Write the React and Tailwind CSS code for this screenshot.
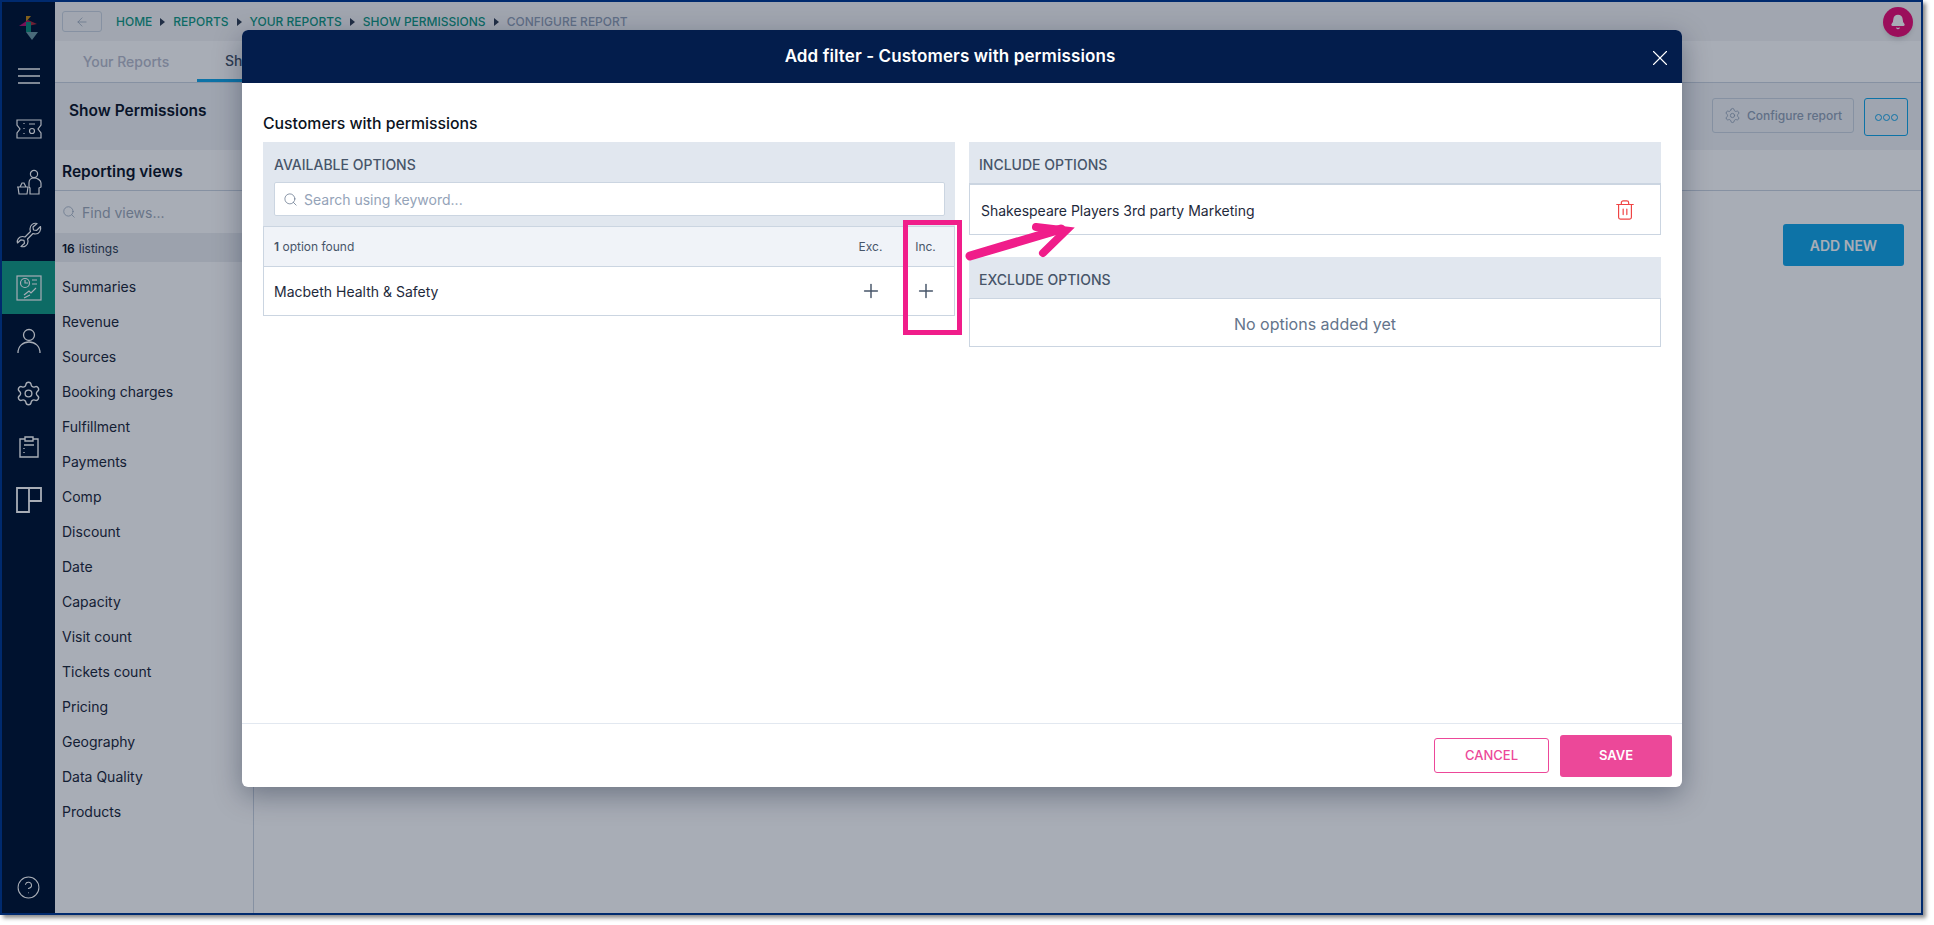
import React from 'react';
import { ArrowLeft, Bell, CircleHelp, Plus, Search, Settings, Trash2, X } from 'lucide-react';

const views = [
  'Summaries', 'Revenue', 'Sources', 'Booking charges', 'Fulfillment', 'Payments', 'Comp', 'Discount',
  'Date', 'Capacity', 'Visit count', 'Tickets count', 'Pricing', 'Geography', 'Data Quality', 'Products',
];

const crumbs = ['HOME', 'REPORTS', 'YOUR REPORTS', 'SHOW PERMISSIONS'];

const Logo = () => (
  <svg width="20" height="26" viewBox="0 0 20 26">
    <polygon points="7,1 12,1 7,7" fill="#c58a16" />
    <polygon points="0,11 9,5 9,11" fill="#b5146f" />
    <polygon points="9,5 18,9 9,11" fill="#a92a3a" />
    <polygon points="7,7 12,7 12,17 7,17" fill="#0f8a78" />
    <polygon points="7,17 19,17 13,25" fill="#6f9aa5" />
  </svg>
);

const Hamburger = () => (
  <svg width="22" height="16" viewBox="0 0 22 16" stroke="#fff" strokeWidth="1.3">
    <path d="M0 1h22M0 8h22M0 15h22" />
  </svg>
);

const Ticket = () => (
  <svg width="26" height="20" viewBox="0 0 26 20" fill="none" stroke="#fff" strokeWidth="1.2">
    <path d="M1 1h24v5l-3 4 3 4v5H1v-5l3-4-3-4z" />
    <path d="M8 4v1M8 9v1M8 14v1M13 5h6" />
    <circle cx="16" cy="12" r="2.5" />
  </svg>
);

const Basket = () => (
  <svg width="26" height="26" viewBox="0 0 26 26" fill="none" stroke="#fff" strokeWidth="1.2">
    <circle cx="18" cy="5" r="3.6" />
    <path d="M14 25v-6l-1-1v-4c0-3 2-5 5-5s7 2 7 5v4l-2 1v6z" />
    <path d="M1 18h11M2 18l1 7h8l1-7M4 18l2-4h2l2 4" />
  </svg>
);

const Spanner = () => (
  <svg width="26" height="26" viewBox="0 0 26 26" fill="none" stroke="#fff" strokeWidth="1.2" strokeLinejoin="round">
    <path d="M24.5 4.5 L20.5 8.5 L17.5 8 L17 5 L21 1.5 C17.5 0.5 14 3 14 7 C14 8 14.2 8.5 14.5 9.5 L9 15 C8 14.6 7 14.5 6.5 14.5 C3 14.5 0.5 18 1.5 21 L5 17.8 L8 18.3 L8.5 21.3 L5 24.5 C8.5 25.5 12 23 12 19.5 C12 18.5 11.8 18 11.5 17 L17 11.5 C18 11.9 19 12 19.5 12 C23 12 25.5 8.5 24.5 4.5 Z" />
  </svg>
);

const Report = () => (
  <svg width="26" height="26" viewBox="0 0 26 26" fill="none" stroke="#fff" strokeWidth="1.2">
    <rect x="1" y="1" width="24" height="24" />
    <circle cx="9" cy="8" r="4.5" />
    <path d="M9 5v3h3M16 5h5M16 9h5M8 20l5-4 2 2 5-5M8 23l6-3" />
  </svg>
);

const Person = () => (
  <svg width="24" height="26" viewBox="0 0 24 26" fill="none" stroke="#fff" strokeWidth="1.3">
    <circle cx="12" cy="7" r="5.5" />
    <path d="M1 25c0-7 5-11 11-11s11 4 11 11" />
  </svg>
);

const Clipboard = () => (
  <svg width="20" height="22" viewBox="0 0 20 22" fill="none" stroke="#fff" strokeWidth="1.4">
    <path d="M6 3H1v18h18V3h-5" />
    <path d="M6 1h8v4H6zM5 9h10M5 12v1M5 16v1" />
  </svg>
);

const Panels = () => (
  <svg width="26" height="26" viewBox="0 0 26 26" fill="none" stroke="#fff" strokeWidth="1.8">
    <path d="M1 1h24v13H13v11H1zM13 1v13" />
  </svg>
);

const RailItem = ({ active, children }) => (
  <div className={`h-[53px] flex items-center justify-center ${active ? 'bg-[#149b85]' : ''}`}>{children}</div>
);

const SectionHead = ({ children, className = '' }) => (
  <div className={`flex items-center px-[10px] text-[14px] font-medium text-[#475569] ${className}`}>{children}</div>
);

const Arrow = () => (
  <svg className="absolute left-[721px] top-[190px]" width="120" height="46" viewBox="0 0 120 46">
    <path d="M7 36 L98 9" stroke="#f01d8a" strokeWidth="9" strokeLinecap="round" fill="none" />
    <path d="M73 7 L103 10.5 L80 33" stroke="#f01d8a" strokeWidth="8" strokeLinecap="round" fill="none" />
  </svg>
);

export default function App() {
  return (
    <div className="w-[1934px] h-[925px] bg-white font-['Inter',sans-serif] overflow-hidden">
      <div className="relative w-[1923px] h-[915px] border-2 border-[#002a6e] shadow-[3px_3px_4px_rgba(0,0,0,0.45)] flex overflow-hidden bg-white">
        {/* left rail */}
        <div className="w-[53px] shrink-0 bg-[#001432] flex flex-col">
          <div className="h-[47px] flex items-center justify-center pt-[4px]"><Logo /></div>
          <RailItem><Hamburger /></RailItem>
          <RailItem><Ticket /></RailItem>
          <RailItem><Basket /></RailItem>
          <RailItem><Spanner /></RailItem>
          <RailItem active><Report /></RailItem>
          <RailItem><Person /></RailItem>
          <RailItem><Settings size={27} strokeWidth={1.2} color="#fff" /></RailItem>
          <RailItem><Clipboard /></RailItem>
          <RailItem><Panels /></RailItem>
          <div className="mt-auto h-[38px] flex items-start justify-center">
            <CircleHelp size={25} strokeWidth={1} color="#fff" />
          </div>
        </div>

        {/* page under the dialog */}
        <div className="flex-1 flex flex-col min-w-0">
          <div className="h-[39px] bg-[#f5f5f6] flex items-center pl-[7px] pr-[8px]">
            <div className="w-[40px] h-[21px] border border-[#cbd5e1] rounded-[3px] flex items-center justify-center mr-[14px]">
              <ArrowLeft size={14} strokeWidth={1.2} color="#94a3b8" />
            </div>
            <div className="flex items-center gap-[8px] text-[12px] font-medium text-[#149b85]">
              {crumbs.map((c) => (
                <React.Fragment key={c}>
                  <span>{c}</span>
                  <span className="w-0 h-0 border-y-[4px] border-y-transparent border-l-[5px] border-l-[#334155]" />
                </React.Fragment>
              ))}
              <span className="text-[#94a3b8]">CONFIGURE REPORT</span>
            </div>
            <div className="relative ml-auto w-[30px] h-[30px] rounded-full bg-[#eb0f76] flex items-center justify-center shadow-md">
              <Bell size={16} color="#fff" fill="#fff" />
            </div>
          </div>

          <div className="h-[42px] bg-white border-b border-[#cbd5e1] flex items-end text-[14px] font-medium">
            <div className="w-[142px] h-full flex items-center justify-center text-[#b9bdcd]">Your Reports</div>
            <div className="w-[150px] h-full flex items-center pl-[28px] border-b-[3px] border-[#15a8e9] text-[#475569] whitespace-nowrap overflow-hidden">Show Permissions</div>
          </div>

          <div className="h-[67px] bg-[#f1f3f6] flex items-start">
            <div className="pl-[14px] pt-[16px] text-[15.5px] font-semibold text-[#0f172a]">Show Permissions</div>
            <div className="ml-auto flex items-start gap-[10px] pt-[15px] pr-[13px]">
              <div className="w-[142px] h-[35px] border border-[#cbd5e1] rounded-[3px] flex items-center justify-center gap-[6px] text-[12px] font-medium text-[#94a3b8]">
                <Settings size={17} strokeWidth={1.2} />
                Configure report
              </div>
              <div className="w-[44px] h-[38px] border border-[#15a8e9] rounded-[3px] flex items-center justify-center gap-[1px]">
                <span className="w-[7px] h-[7px] rounded-full border border-[#15a8e9]" />
                <span className="w-[7px] h-[7px] rounded-full border border-[#15a8e9]" />
                <span className="w-[7px] h-[7px] rounded-full border border-[#15a8e9]" />
              </div>
            </div>
          </div>

          <div className="flex-1 flex min-h-0">
            <div className="w-[199px] shrink-0 border-r border-[#cbd5e1] flex flex-col">
              <div className="h-[41px] border-b border-[#cbd5e1] flex items-center pl-[7px] pt-[3px] text-[15.5px] font-semibold text-[#0f172a]">Reporting views</div>
              <div className="h-[42px] flex items-center gap-[6px] pl-[7px] text-[14px] text-[#a0aab9]">
                <Search size={14} strokeWidth={1.2} color="#94a3b8" />
                Find views...
              </div>
              <div className="h-[29px] bg-[#edeef2] flex items-center pl-[7px] pt-[2px] text-[12px] text-[#334155]">
                <span className="font-semibold text-[#0f172a] mr-[4px]">16</span>listings
              </div>
              <div className="pt-[7px] flex flex-col">
                {views.map((v) => (
                  <div key={v} className="h-[35px] flex items-center pl-[7px] text-[14px] text-[#1e293b]">{v}</div>
                ))}
              </div>
            </div>
            <div className="flex-1 flex flex-col">
              <div className="h-[41px] border-b border-[#cbd5e1]" />
              <div className="flex justify-end pt-[33px] pr-[17px]">
                <div className="w-[121px] h-[42px] bg-[#15a8e9] rounded-[3px] flex items-center justify-center text-[14px] font-semibold text-white">ADD NEW</div>
              </div>
            </div>
          </div>
        </div>

        {/* backdrop and dialog */}
        <div className="absolute inset-0 bg-[#000f29]/[0.34] pl-[240px] pt-[28px]">
          <div className="relative w-[1440px] h-[757px] bg-white rounded-[6px] shadow-[0_8px_28px_rgba(0,15,41,0.35)] flex flex-col overflow-hidden">
            <div className="h-[53px] shrink-0 bg-[#031d4c] flex items-center justify-center pr-[24px] relative">
              <span className="text-[17px] font-semibold tracking-[0.1px] text-white">Add filter - Customers with permissions</span>
              <X size={26} strokeWidth={1} color="#fff" className="absolute right-[9px] top-[15px]" />
            </div>

            <div className="flex-1 px-[21px] pt-[27px] flex flex-col">
              <div className="h-[32px] text-[15.8px] leading-[28px] font-medium text-[#0b1220]">Customers with permissions</div>
              <div className="flex gap-[14px]">
                <div className="w-[692px]">
                  <div className="bg-[#e1e7ef] h-[84px] flex flex-col">
                    <SectionHead className="h-[40px] pl-[11px] pt-[4px]">AVAILABLE OPTIONS</SectionHead>
                    <div className="ml-[11px] mr-[10px] h-[34px] bg-white border border-[#cbd5e1] rounded-[2px] flex items-center gap-[6px] pl-[8px] text-[14px] text-[#94a3b8]">
                      <Search size={15} strokeWidth={1.2} color="#64748b" />
                      Search using keyword...
                    </div>
                  </div>
                  <div className="border border-[#cbd5e1]">
                    <div className="h-[40px] bg-[#f0f3f8] border-b border-[#cbd5e1] flex items-center pl-[10px] pr-[1px] text-[12px] text-[#475569]">
                      <span className="flex-1"><span className="font-semibold">1</span> option found</span>
                      <span className="w-[55px] text-center">Exc.</span>
                      <span className="w-[55px] text-center">Inc.</span>
                    </div>
                    <div className="h-[48px] flex items-center pl-[10px] pr-[1px] text-[14px] text-[#1e293b]">
                      <span className="flex-1">Macbeth Health &amp; Safety</span>
                      <span className="w-[55px] flex justify-center"><Plus size={22} strokeWidth={1.6} color="#475569" /></span>
                      <span className="w-[55px] flex justify-center"><Plus size={22} strokeWidth={1.6} color="#475569" /></span>
                    </div>
                  </div>
                </div>

                <div className="w-[692px]">
                  <SectionHead className="h-[43px] pt-[3px] bg-[#e1e7ef] border-b-2 border-[#cbd5e1]">INCLUDE OPTIONS</SectionHead>
                  <div className="h-[50px] border border-t-0 border-[#cbd5e1] flex items-center pl-[11px] pr-[24px] pt-[1px] text-[14px] text-[#1e293b]">
                    <span className="flex-1">Shakespeare Players 3rd party Marketing</span>
                    <Trash2 size={22} strokeWidth={1.3} color="#ef4444" />
                  </div>
                  <SectionHead className="mt-[22px] h-[42px] pt-[3px] bg-[#e1e7ef] border-b border-[#cbd5e1]">EXCLUDE OPTIONS</SectionHead>
                  <div className="h-[48px] border border-t-0 border-[#cbd5e1] flex items-center justify-center pt-[3px] text-[16px] text-[#64748b]">No options added yet</div>
                </div>
              </div>
            </div>

            <div className="h-[64px] shrink-0 border-t border-[#e2e8f0] flex items-center justify-end gap-[11px] pr-[10px]">
              <div className="w-[115px] h-[35px] border border-[#ec4899] rounded-[3px] flex items-center justify-center text-[13px] font-medium text-[#ec4899]">CANCEL</div>
              <div className="w-[112px] h-[42px] bg-[#ec4899] rounded-[3px] flex items-center justify-center text-[13px] font-semibold text-white">SAVE</div>
            </div>

            {/* annotation */}
            <div className="absolute left-[661px] top-[190px] w-[59px] h-[115px] border-[5px] border-[#f01d8a]" />
            <Arrow />
          </div>
        </div>
      </div>
    </div>
  );
}
